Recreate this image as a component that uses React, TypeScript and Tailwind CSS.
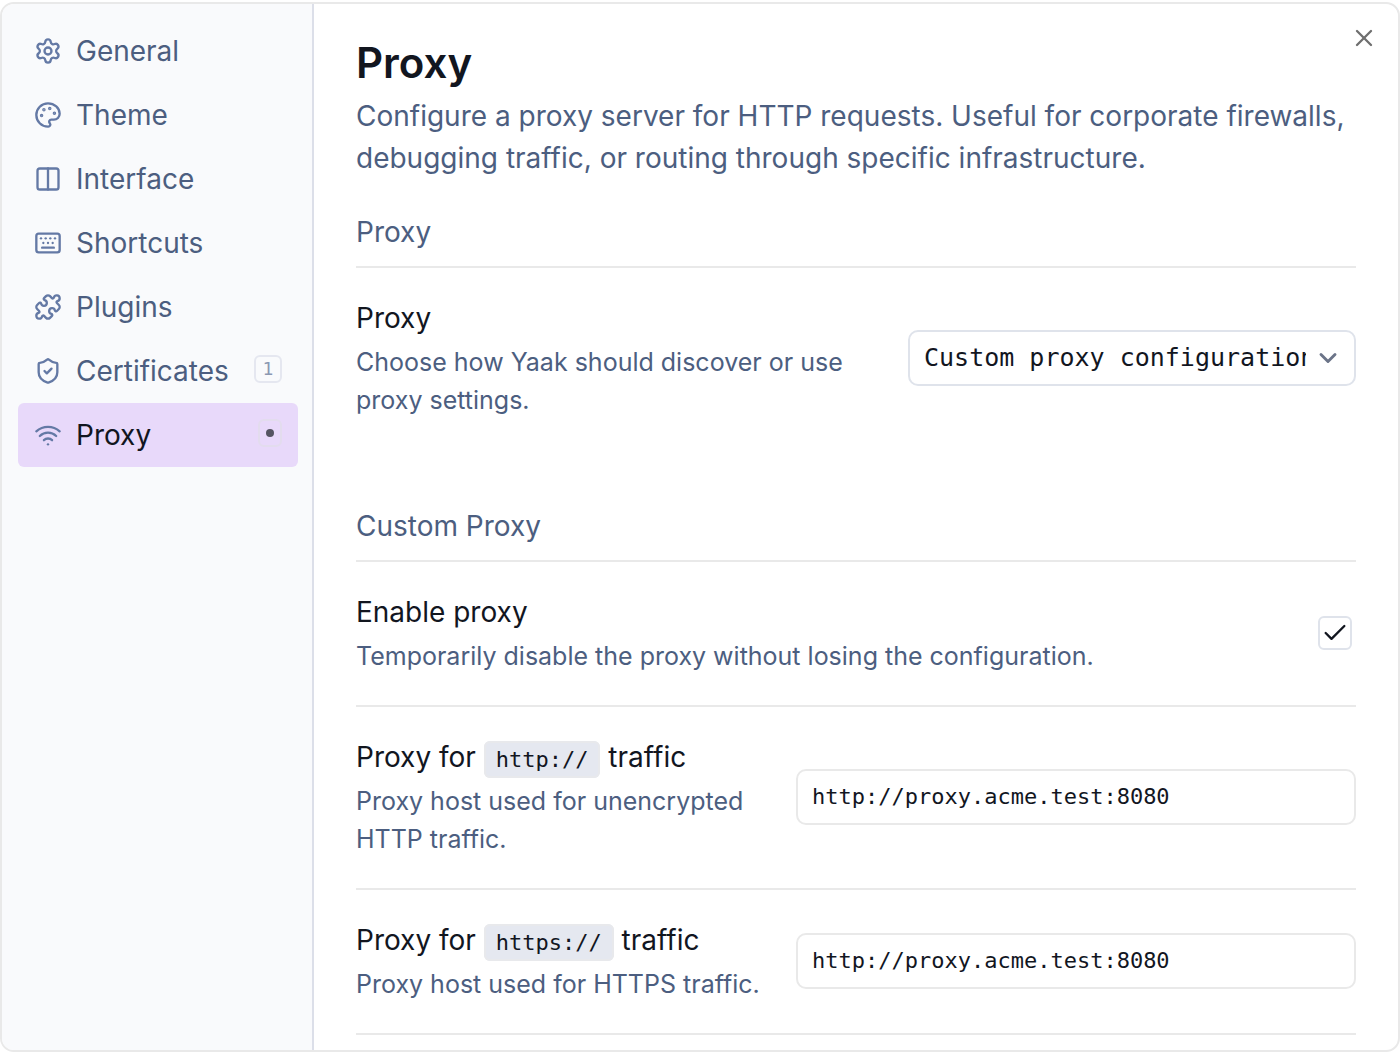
import { useState } from 'react';
import type { ReactNode } from 'react';
import {
  Check,
  ChevronDown,
  Columns2,
  Keyboard,
  Palette,
  Puzzle,
  Settings,
  ShieldCheck,
  Wifi,
  X,
} from 'lucide-react';
import type { LucideIcon } from 'lucide-react';
import { clsx } from 'clsx';

interface Tab {
  label: string;
  icon: LucideIcon;
  count?: number;
  dot?: boolean;
}

const tabs: Tab[] = [
  { label: 'General', icon: Settings },
  { label: 'Theme', icon: Palette },
  { label: 'Interface', icon: Columns2 },
  { label: 'Shortcuts', icon: Keyboard },
  { label: 'Plugins', icon: Puzzle },
  { label: 'Certificates', icon: ShieldCheck, count: 1 },
  { label: 'Proxy', icon: Wifi, dot: true },
];

interface TabButtonProps {
  tab: Tab;
  active: boolean;
  onClick: () => void;
}

function TabButton({ tab, active, onClick }: TabButtonProps) {
  const Icon = tab.icon;

  return (
    <button
      type="button"
      onClick={onClick}
      className={clsx(
        'flex h-16 w-full items-center gap-3.5 rounded-md px-4 text-left text-[28px]',
        active ? 'bg-[#e8d9fa] text-[#12161f]' : 'text-[#4c5e80]'
      )}
    >
      <Icon className="size-7 shrink-0 text-[#6479a5]" strokeWidth={2} />
      <span className="flex-1">{tab.label}</span>
      {tab.count !== undefined && (
        <span className="mb-1 flex h-7 w-7 items-center justify-center rounded-md border-2 border-[#e5e7f0] font-['DejaVu_Sans_Mono',monospace] text-lg leading-none text-[#8b98b2]">
          {tab.count}
        </span>
      )}
      {tab.dot && (
        <span className="mb-1 flex h-7 w-6 items-center justify-center rounded-md border-2 border-[#e3dcee]">
          <span className="size-2 rounded-full bg-[#555462]" />
        </span>
      )}
    </button>
  );
}

function Section({ title, className, children }: { title: string; className?: string; children: ReactNode }) {
  return (
    <section className={className}>
      <h2 className="border-b-2 border-[#e9e9e9] pb-[13px] text-[28px] leading-[42px] text-[#4c5e80]">{title}</h2>
      {children}
    </section>
  );
}

interface SettingRowProps {
  id: string;
  title: ReactNode;
  description: string;
  divider?: boolean;
  children: ReactNode;
}

function SettingRow({ id, title, description, divider = true, children }: SettingRowProps) {
  return (
    <div
      className={clsx(
        'flex items-center justify-between pt-7 pb-[30px]',
        divider && 'border-b-2 border-[#e9e9e9]'
      )}
    >
      <div className="min-w-0 flex-1">
        <label htmlFor={id} className="block text-[28px] leading-[44px] text-[#12161f]">
          {title}
        </label>
        <p className="mt-[3px] text-[25px] leading-[38px] text-[#4c5e80]">{description}</p>
      </div>
      {children}
    </div>
  );
}

function Code({ children }: { children: ReactNode }) {
  return (
    <code className="rounded-md border-2 border-[#e8e9ec] bg-[#e5e8f0] px-2.5 py-1 font-['DejaVu_Sans_Mono',monospace] text-[22px] leading-none">
      {children}
    </code>
  );
}

function HostInput({ id, value, onChange }: { id: string; value: string; onChange: (v: string) => void }) {
  return (
    <input
      id={id}
      type="text"
      value={value}
      onChange={(e) => onChange(e.target.value)}
      className="h-14 w-[56%] rounded-[10px] border-2 border-[#e9e9e9] bg-white px-3.5 font-['DejaVu_Sans_Mono',monospace] text-[22px] text-[#12161f] outline-none"
    />
  );
}

export default function App() {
  const [activeTab, setActiveTab] = useState('Proxy');
  const [mode, setMode] = useState('custom');
  const [enabled, setEnabled] = useState(true);
  const [httpHost, setHttpHost] = useState('http://proxy.acme.test:8080');
  const [httpsHost, setHttpsHost] = useState('http://proxy.acme.test:8080');

  return (
    <div className="flex min-h-screen bg-white pt-0.5 font-[Inter,sans-serif]">
      <div className="relative flex flex-1 overflow-hidden rounded-[14px] border-2 border-[#e9e9e9] bg-white">
        <nav className="w-[312px] shrink-0 border-r-2 border-[#dcdfe9] bg-[#f9fafc] px-4 pt-[15px] pr-3.5">
          {tabs.map((tab) => (
            <TabButton
              key={tab.label}
              tab={tab}
              active={tab.label === activeTab}
              onClick={() => setActiveTab(tab.label)}
            />
          ))}
        </nav>

        <main className="min-w-0 flex-1 px-[42px] pt-8 pb-3.5">
          <h1 className="text-[42px] leading-[54px] font-semibold text-[#12161f]">Proxy</h1>
          <p className="mt-[5px] text-[28px] leading-[42px] text-[#4c5e80]">
            Configure a proxy server for HTTP requests. Useful for corporate firewalls, debugging traffic, or
            routing through specific infrastructure.
          </p>

          <Section title="Proxy" className="mt-8">
            <SettingRow
              id="proxy-mode"
              title="Proxy"
              description="Choose how Yaak should discover or use proxy settings."
              divider={false}
            >
              <div className="relative w-[448px]">
                <select
                  id="proxy-mode"
                  value={mode}
                  onChange={(e) => setMode(e.target.value)}
                  className="h-14 w-full appearance-none rounded-[10px] border-2 border-[#dfe3eb] bg-white pr-12 pl-3.5 font-['DejaVu_Sans_Mono',monospace] text-[25px] text-[#12161f] outline-none"
                >
                  <option value="automatic">Automatic proxy detection</option>
                  <option value="custom">Custom proxy configuration</option>
                  <option value="disabled">No proxy</option>
                </select>
                <ChevronDown
                  className="pointer-events-none absolute top-3.5 right-3.5 size-7 text-[#6b7488]"
                  strokeWidth={2.5}
                />
              </div>
            </SettingRow>
          </Section>

          <Section title="Custom Proxy" className="mt-14">
            <SettingRow
              id="proxy-enabled"
              title="Enable proxy"
              description="Temporarily disable the proxy without losing the configuration."
            >
              <span className="relative mr-1 flex size-[34px]">
                <input
                  id="proxy-enabled"
                  type="checkbox"
                  checked={enabled}
                  onChange={(e) => setEnabled(e.target.checked)}
                  className="size-full appearance-none rounded-md border-2 border-[#dfe3eb] bg-white"
                />
                {enabled && (
                  <Check
                    className="pointer-events-none absolute inset-0 m-auto size-7 text-[#12161f]"
                    strokeWidth={2}
                  />
                )}
              </span>
            </SettingRow>

            <SettingRow
              id="proxy-http"
              title={<>Proxy for <Code>http://</Code> traffic</>}
              description="Proxy host used for unencrypted HTTP traffic."
            >
              <HostInput id="proxy-http" value={httpHost} onChange={setHttpHost} />
            </SettingRow>

            <SettingRow
              id="proxy-https"
              title={<>Proxy for <Code>https://</Code> traffic</>}
              description="Proxy host used for HTTPS traffic."
            >
              <HostInput id="proxy-https" value={httpsHost} onChange={setHttpsHost} />
            </SettingRow>
          </Section>
        </main>

        <button
          type="button"
          aria-label="Close"
          className="absolute top-3 right-3 flex size-11 items-center justify-center rounded-md text-[#6f6f6f]"
        >
          <X className="size-7" strokeWidth={2} />
        </button>
      </div>
    </div>
  );
}
